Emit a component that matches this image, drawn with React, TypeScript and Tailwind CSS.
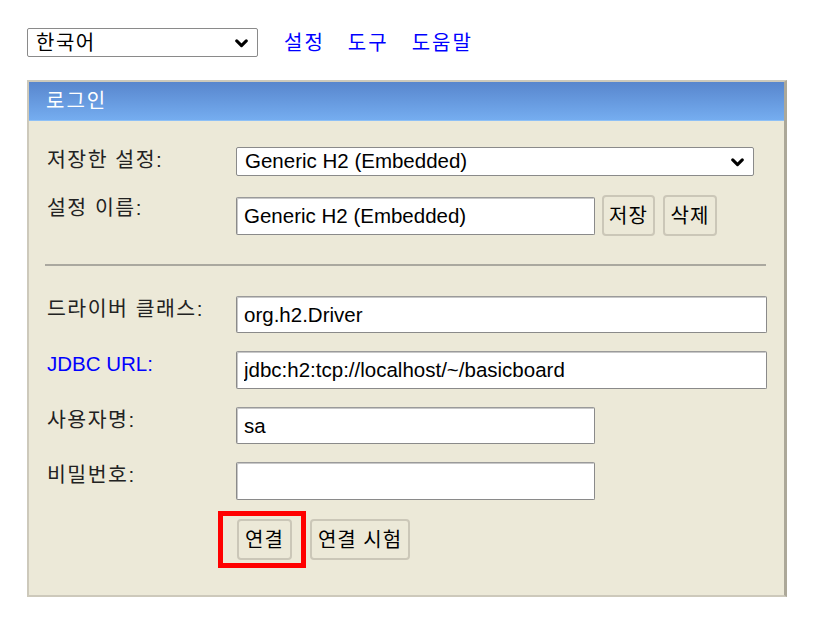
import React, { useState } from "react";

const font = { fontFamily: '"Liberation Sans", "Noto Sans CJK KR", sans-serif' };

function Chevron({ className }: { className?: string }) {
	return (
		<svg viewBox="0 0 12 8" className={className} fill="none" stroke="#000" strokeWidth="2.8" strokeLinecap="round" strokeLinejoin="round">
			<path d="M1.6 1.6 L6 6 L10.4 1.6" />
		</svg>
	);
}

function Field({ label, blue, children }: { label: string; blue?: boolean; children: React.ReactNode }) {
	return (
		<div className="flex items-start">
			<div className={`w-[189px] shrink-0 leading-[26px] ${blue ? "text-[#0000ff]" : "text-[#222] tracking-[1.5px]"}`}>{label}</div>
			{children}
		</div>
	);
}

const inputCls =
	"h-[37px] bg-white border border-[#8a8a8a] border-t-[#9a9a9a] rounded-[2px] px-[7px] text-[20.5px] text-black outline-none shadow-[inset_1px_1px_0_#c8c8c8]";

const btnCls =
	"h-[41px] border-2 border-[#cbc7b8] rounded-[4px] bg-[#ece9d8] px-[5px] text-[20px] text-black leading-none whitespace-nowrap tracking-[1px]";

export default function App() {
	const [driver, setDriver] = useState("org.h2.Driver");
	const [url, setUrl] = useState("jdbc:h2:tcp://localhost/~/basicboard");
	const [user, setUser] = useState("sa");
	const [password, setPassword] = useState("");
	const [name, setName] = useState("Generic H2 (Embedded)");

	return (
		<div className="w-[836px] h-[631px] bg-white text-[20.5px]" style={font}>
			<div className="pt-[28px] pl-[27px] flex items-center">
				<div className="relative w-[231px] h-[29px] border border-[#8a8a8a] rounded-[2px] bg-white flex items-center pl-[8px]">
					<span className="text-[20px] leading-none text-black tracking-[1.5px]">한국어</span>
					<Chevron className="absolute right-[9px] top-[10px] w-[13px] h-[9px]" />
				</div>
				<div className="flex gap-[23px] ml-[26px] text-[20px] text-[#0000ff] leading-none tracking-[2px]">
					<a>설정</a>
					<a>도구</a>
					<a>도움말</a>
				</div>
			</div>

			<div className="mt-[23px] ml-[27px] w-[760px] border-2 border-[#cdc9bb] border-r-[3px] border-r-[#aca899] bg-[#ece9d8]">
				<div className="h-[39px] bg-gradient-to-b from-[#5886cd] to-[#75adf0] border-b border-[#8ec0f6] pl-[17px] flex items-center text-white text-[20px] tracking-[2px]">
					로그인
				</div>

				<div className="pt-[26px] pl-[18px] pr-[17px] pb-[35px] flex flex-col">
					<Field label="저장한 설정:">
						<div className="relative w-[518px] h-[29px] border border-[#8a8a8a] rounded-[2px] bg-white flex items-center pl-[8px]">
							<span className="text-[20.5px] leading-none text-black">Generic H2 (Embedded)</span>
							<Chevron className="absolute right-[9px] top-[10px] w-[13px] h-[9px]" />
						</div>
					</Field>

					<div className="mt-[19px]">
						<Field label="설정 이름:">
							<div className="flex items-center gap-[8px]">
								<input className={`${inputCls} w-[359px] h-[38px]`} value={name} onChange={(e) => setName(e.target.value)} />
								<button className={`${btnCls} ml-[-1px] w-[53px] px-0`}>저장</button>
								<button className={`${btnCls} w-[54px] px-0`}>삭제</button>
							</div>
						</Field>
					</div>

					<div className="mt-[28px] ml-[-2px] mr-[1px] h-[2px] bg-[#aaa89f]" />

					<div className="mt-[30px] flex flex-col gap-[18px]">
						<Field label="드라이버 클래스:">
							<input className={`${inputCls} w-[531px] h-[36px]`} value={driver} onChange={(e) => setDriver(e.target.value)} />
						</Field>
						<Field label="JDBC URL:" blue>
							<input className={`${inputCls} w-[531px] h-[38px]`} value={url} onChange={(e) => setUrl(e.target.value)} />
						</Field>
						<Field label="사용자명:">
							<input className={`${inputCls} w-[359px]`} value={user} onChange={(e) => setUser(e.target.value)} />
						</Field>
						<Field label="비밀번호:">
							<input type="password" className={`${inputCls} w-[359px] h-[38px]`} value={password} onChange={(e) => setPassword(e.target.value)} />
						</Field>
					</div>

					<div className="mt-[19px] pl-[190px] flex items-center gap-[18px]">
						<div className="relative">
							<button className={`${btnCls} w-[55px] px-0`}>연결</button>
							<div className="absolute left-[-19px] top-[-8px] w-[88px] h-[57px] border-[5px] border-[#ff0000] pointer-events-none" />
						</div>
						<button className={`${btnCls} w-[100px] px-0`}>연결 시험</button>
					</div>
				</div>
			</div>
		</div>
	);
}
